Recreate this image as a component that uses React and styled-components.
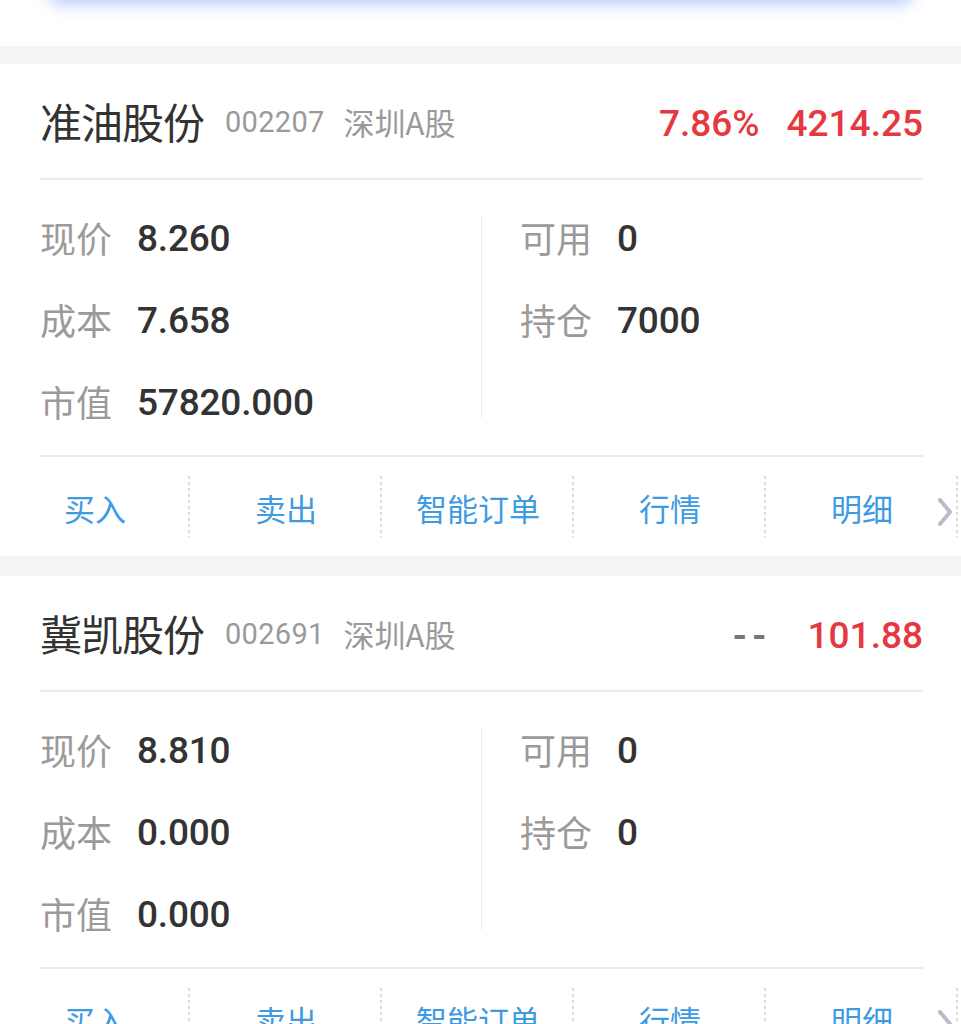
import React from "react";
import styled, { createGlobalStyle } from "styled-components";

const GlobalStyle = createGlobalStyle`
  html, body { margin: 0; padding: 0; background: #fff; }
  body {
    font-family: Roboto, "Noto Sans CJK SC", "Noto Sans", sans-serif;
    -webkit-font-smoothing: antialiased;
  }
`;

const Page = styled.div`
  width: 961px;
  background: #fff;
`;

const TopArea = styled.div`
  height: 46px;
  overflow: hidden;
  background: #fff;
`;

const PrevCard = styled.div`
  margin: -44px 48px 0;
  height: 40px;
  background: #fff;
  border-radius: 12px;
  box-shadow: 0 8px 16px rgba(80, 130, 240, 0.42);
`;

const Band = styled.div`
  height: ${(p) => p.$h}px;
  background: #f4f4f4;
`;

const Card = styled.section`
  background: #fff;
  height: 492px;
  display: flex;
  flex-direction: column;
`;

const Header = styled.div`
  height: 114px;
  margin: 0 38px 0 40px;
  display: flex;
  align-items: center;
  border-bottom: 2px solid #ebebeb;
`;

const Title = styled.div`
  font-family: "Noto Sans CJK SC", sans-serif;
  font-size: 42px;
  color: #333;
  letter-spacing: -1px;
  line-height: 1;
`;

const Code = styled.div`
  font-family: Roboto, sans-serif;
  font-size: 29px;
  color: #9a9a9a;
  margin-left: 21px;
  letter-spacing: 0.3px;
  padding-top: 2px;
`;

const Market = styled.div`
  font-family: "Noto Sans CJK SC", sans-serif;
  font-size: 31px;
  color: #9a9a9a;
  margin-left: 19px;
`;

const Spacer = styled.div`
  flex: 1;
`;

const Quote = styled.div`
  font-family: Roboto, sans-serif;
  font-size: 37px;
  color: ${(p) => (p.$muted ? "#777" : "#e63840")};
  margin-left: ${(p) => p.$gap || 0}px;
  letter-spacing: ${(p) => (p.$muted ? "5px" : "0")};
  font-weight: ${(p) => (p.$muted ? 700 : 500)};
  padding-top: 4px;
`;

const Info = styled.div`
  margin: 0 38px 0 40px;
  padding: 16px 0 13px;
  display: grid;
  grid-template-columns: 441px 1px 1fr;
  border-bottom: 2px solid #ebebeb;
`;

const Col = styled.div`
  display: flex;
  flex-direction: column;
  padding-left: ${(p) => p.$pad || 0}px;
`;

const VLine = styled.div`
  align-self: start;
  margin-top: 20px;
  height: 202px;
  background: #ececec;
`;

const Row = styled.div`
  height: 82px;
  display: flex;
  align-items: center;
`;

const Label = styled.span`
  font-family: "Noto Sans CJK SC", sans-serif;
  font-size: 36px;
  color: #9a9a9a;
  width: 97px;
  flex: none;
`;

const Value = styled.span`
  font-family: Roboto, sans-serif;
  font-size: 37px;
  font-weight: 500;
  color: #333;
  padding-top: 2px;
  letter-spacing: -0.2px;
`;

const Actions = styled.div`
  position: relative;
  flex: 1;
  display: grid;
  grid-template-columns: 190px repeat(4, 192px);
  align-items: center;
`;

const Action = styled.div`
  height: 61px;
  display: flex;
  align-items: center;
  justify-content: center;
  font-family: "Noto Sans CJK SC", sans-serif;
  font-size: 31px;
  color: #3d9be3;
  padding-top: 1px;
  box-sizing: border-box;
  background-image: linear-gradient(to bottom, #dcdcdc 50%, transparent 50%);
  background-size: 2px 6px;
  background-position: right top;
  background-repeat: repeat-y;
`;

const More = styled.div`
  position: absolute;
  right: 8px;
  top: 41px;
  width: 16px;
  height: 28px;
  display: flex;
  background: #fff;
`;

const Chevron = () => (
  <svg width="16" height="28" viewBox="0 0 16 28">
    <polyline
      points="3,2 13,14 3,26"
      fill="none"
      stroke="#b4bdca"
      strokeWidth="4"
      strokeLinecap="round"
      strokeLinejoin="round"
    />
  </svg>
);

const stocks = [
  {
    name: "准油股份",
    code: "002207",
    market: "深圳A股",
    pct: "7.86%",
    value: "4214.25",
    price: "8.260",
    cost: "7.658",
    mv: "57820.000",
    avail: "0",
    hold: "7000",
  },
  {
    name: "冀凯股份",
    code: "002691",
    market: "深圳A股",
    pct: null,
    value: "101.88",
    price: "8.810",
    cost: "0.000",
    mv: "0.000",
    avail: "0",
    hold: "0",
  },
];

const actions = ["买入", "卖出", "智能订单", "行情", "明细"];

function StockCard({ s }) {
  return (
    <Card>
      <Header>
        <Title>{s.name}</Title>
        <Code>{s.code}</Code>
        <Market>{s.market}</Market>
        <Spacer />
        {s.pct ? <Quote>{s.pct}</Quote> : <Quote $muted>--</Quote>}
        <Quote $gap={s.pct ? 27 : 36}>{s.value}</Quote>
      </Header>
      <Info>
        <Col>
          <Row>
            <Label>现价</Label>
            <Value>{s.price}</Value>
          </Row>
          <Row>
            <Label>成本</Label>
            <Value>{s.cost}</Value>
          </Row>
          <Row>
            <Label>市值</Label>
            <Value>{s.mv}</Value>
          </Row>
        </Col>
        <VLine />
        <Col $pad={38}>
          <Row>
            <Label>可用</Label>
            <Value>{s.avail}</Value>
          </Row>
          <Row>
            <Label>持仓</Label>
            <Value>{s.hold}</Value>
          </Row>
        </Col>
      </Info>
      <Actions>
        {actions.map((a) => (
          <Action key={a}>{a}</Action>
        ))}
        <More>
          <Chevron />
        </More>
      </Actions>
    </Card>
  );
}

export default function App() {
  return (
    <Page>
      <GlobalStyle />
      <TopArea>
        <PrevCard />
      </TopArea>
      <Band $h={18} />
      <StockCard s={stocks[0]} />
      <Band $h={20} />
      <StockCard s={stocks[1]} />
    </Page>
  );
}
